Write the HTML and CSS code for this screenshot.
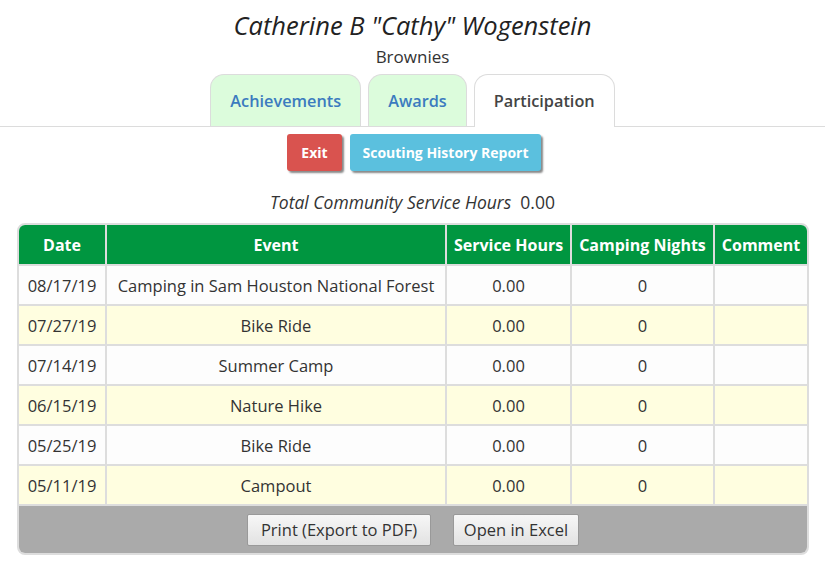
FILE: index.html
```html
<!DOCTYPE html>
<html>
<head>
<meta charset="utf-8">
<link rel="stylesheet" href="styles.css">
</head>
<body>
<div class="header">
  <h1 class="name">Catherine B "Cathy" Wogenstein</h1>
  <div class="troop">Brownies</div>
  <div class="tabs">
    <div class="tab">Achievements</div>
    <div class="tab">Awards</div>
    <div class="tab active">Participation</div>
  </div>
</div>
<div class="actions">
  <button class="btn btn-exit">Exit</button>
  <button class="btn btn-report">Scouting History Report</button>
</div>
<div class="total"><em>Total Community Service Hours</em><span>0.00</span></div>
<div class="grid">
  <table>
    <colgroup>
      <col class="c-date"><col class="c-event"><col class="c-hours"><col class="c-nights"><col class="c-comment">
    </colgroup>
    <thead>
      <tr><th>Date</th><th>Event</th><th>Service Hours</th><th>Camping Nights</th><th>Comment</th></tr>
    </thead>
    <tbody>
      <tr><td>08/17/19</td><td>Camping in Sam Houston National Forest</td><td>0.00</td><td>0</td><td></td></tr>
      <tr class="alt"><td>07/27/19</td><td>Bike Ride</td><td>0.00</td><td>0</td><td></td></tr>
      <tr><td>07/14/19</td><td>Summer Camp</td><td>0.00</td><td>0</td><td></td></tr>
      <tr class="alt"><td>06/15/19</td><td>Nature Hike</td><td>0.00</td><td>0</td><td></td></tr>
      <tr><td>05/25/19</td><td>Bike Ride</td><td>0.00</td><td>0</td><td></td></tr>
      <tr class="alt"><td>05/11/19</td><td>Campout</td><td>0.00</td><td>0</td><td></td></tr>
    </tbody>
  </table>
  <div class="footer">
    <button class="fbtn fbtn-print">Print (Export to PDF)</button>
    <button class="fbtn fbtn-excel">Open in Excel</button>
  </div>
</div>
</body>
</html>
```
FILE: styles.css
```css
* { box-sizing: border-box; }
body {
  margin: 0;
  font-family: "Open Sans", "Noto Sans", sans-serif;
  font-size: 15px;
  color: #333;
  background: #fff;
}
.header {
  text-align: center;
  border-bottom: 1px solid #dcdcdc;
}
.name {
  margin: 0;
  padding-top: 8px;
  font-size: 25.5px;
  font-weight: normal;
  font-style: italic;
  line-height: 34px;
  color: #222;
}
.troop {
  margin-top: 5px;
  font-size: 17px;
  line-height: 20px;
}
.tabs {
  display: flex;
  justify-content: center;
  gap: 7px;
  margin-top: 7px;
}
.tab {
  height: 52px;
  line-height: 52px;
  padding: 0 19px;
  border: 1px solid #dcdcdc;
  border-bottom: none;
  border-radius: 14px 14px 0 0;
  background: #dcfcdc;
  color: #3b7bbf;
  font-weight: 600;
  font-size: 16.3px;
}
.tab.active {
  background: #fff;
  color: #444;
  margin-bottom: -1px;
  height: 53px;
}
.actions {
  display: flex;
  justify-content: center;
  gap: 8px;
  margin-top: 7px;
  padding-left: 3px;
}
.btn {
  height: 37px;
  border: none;
  border-radius: 3px;
  color: #fff;
  font-family: inherit;
  font-weight: 700;
  font-size: 14px;
  padding: 0;
  box-shadow: 2px 2px 2px #888;
}
.btn-exit { background: #d9534f; width: 55px; }
.btn-report { background: #5bc0de; width: 191px; }
.total {
  text-align: center;
  margin-top: 19px;
  font-size: 17.5px;
  line-height: 24px;
  color: #333;
}
.total span { margin-left: 9px; }
.grid {
  margin: 9px 17px 0 17px;
  width: 792px;
  border: 2px solid #ddd;
  border-radius: 8px;
  overflow: hidden;
}
table {
  width: 100%;
  border-collapse: collapse;
  table-layout: fixed;
}
.c-date { width: 87px; }
.c-event { width: 340px; }
.c-hours { width: 125px; }
.c-nights { width: 143px; }
.c-comment { width: auto; }
th {
  background: #009640;
  color: #fff;
  font-weight: 700;
  font-size: 16px;
  height: 40px;
  border: 2px solid #ddd;
  border-top: none;
  padding: 0;
  white-space: nowrap;
}
th:first-child, td:first-child { border-left: none; }
th:last-child, td:last-child { border-right: none; }
td {
  height: 40px;
  border: 2px solid #ddd;
  text-align: center;
  padding: 0;
  font-size: 16.5px;
  background: #fdfdfd;
  white-space: nowrap;
}
tr.alt td { background: #fffee0; }
.footer {
  background: #aaaaaa;
  height: 47px;
  display: flex;
  justify-content: center;
  align-items: center;
  gap: 22px;
}
.fbtn {
  height: 32px;
  font-family: inherit;
  font-size: 16.5px;
  color: #333;
  background: linear-gradient(#f7f7f7, #e2e2e2);
  border: 1px solid #999;
  border-radius: 2px;
  padding: 0;
  white-space: nowrap;
}
.fbtn-print { width: 184px; }
.fbtn-excel { width: 126px; }
```
